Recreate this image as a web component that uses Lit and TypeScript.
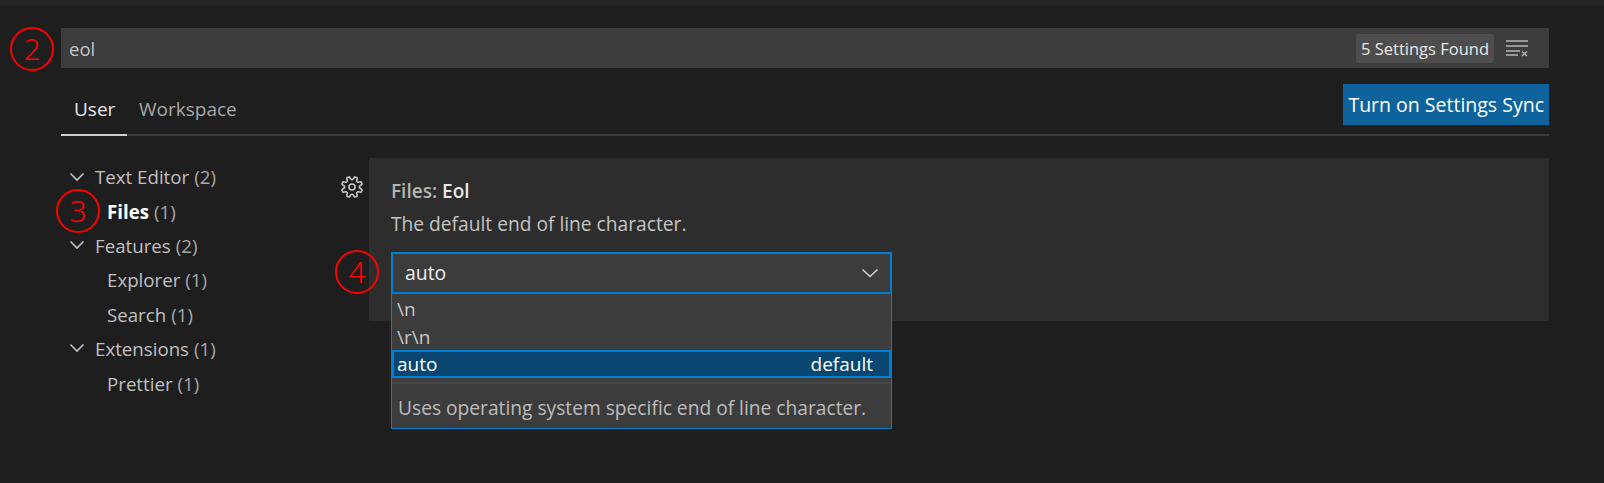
import { LitElement, html, css, svg } from "lit";
import { customElement } from "lit/decorators.js";

const chevron = svg`<svg class="chev" viewBox="0 0 16 10" width="16" height="10"><path d="M1.5 1.5 8 8l6.5-6.5" fill="none" stroke="currentColor" stroke-width="1.6"/></svg>`;

const gearPath = (() => {
  const pts: string[] = [];
  const n = 160;
  for (let i = 0; i < n; i++) {
    const a = (i / n) * Math.PI * 2;
    const w = Math.max(-1, Math.min(1, Math.cos(a * 8 + Math.PI / 8 * 8) * 1.8));
    const r = 9 + 1.5 * w;
    pts.push(`${(12 + r * Math.sin(a)).toFixed(2)} ${(12 - r * Math.cos(a)).toFixed(2)}`);
  }
  return "M" + pts.join("L") + "Z";
})();

const tree = [
  { label: "Text Editor", count: 2, top: true },
  { label: "Files", count: 1, active: true, note: "3" },
  { label: "Features", count: 2, top: true },
  { label: "Explorer", count: 1 },
  { label: "Search", count: 1 },
  { label: "Extensions", count: 1, top: true },
  { label: "Prettier", count: 1 },
];

@customElement("app-root")
export class AppRoot extends LitElement {
  static styles = css`
    :host {
      display: block;
      width: 1604px;
      height: 483px;
      overflow: hidden;
      background: #1e1e1e;
      color: #cccccc;
      font-family: "Open Sans", "Noto Sans", sans-serif;
      font-size: 19px;
    }
    .strip { height: 6px; background: #252526; }
    .content { padding: 22px 55px 0 61px; }
    .search {
      position: relative;
      height: 40px;
      background: #3c3c3c;
      display: flex;
      align-items: center;
      padding: 0 20px 0 8px;
      font-size: 18.5px;
      color: #c4c4c4;
    }
    .query { flex: 1; }
    .found {
      background: #4d4d4d;
      color: #e8e8e8;
      font-size: 16.5px;
      height: 29px;
      line-height: 29px;
      padding: 0 5px;
      border-radius: 2px;
      margin-right: 11px;
    }
    .clear { display: block; }
    .note {
      position: absolute;
      width: 44px;
      height: 44px;
      box-sizing: border-box;
      border: 2px solid #ff0000;
      border-radius: 50%;
      color: #ff0000;
      display: flex;
      align-items: center;
      justify-content: center;
      font-family: "Noto Sans", sans-serif;
      font-weight: 300;
      font-size: 30px;
      line-height: 1;
    }
    .n2 { left: -51px; top: -1px; }
    .n3 { left: -5px; top: -5px; }
    .n4 { left: -56px; top: -2px; }
    .header {
      display: flex;
      justify-content: space-between;
      align-items: flex-start;
      margin-top: 16px;
      height: 50px;
      border-bottom: 2px solid #3a3a3a;
    }
    .tabs { display: flex; height: 52px; }
    .tab {
      height: 52px;
      box-sizing: border-box;
      padding: 12px 13px 0;
      line-height: 26px;
      font-size: 19px;
      color: #a8a8a8;
      white-space: nowrap;
    }
    .tab.on { color: #e7e7e7; border-bottom: 2px solid #d0d0d0; width: 66px; padding: 12px 0 0 13px; }
    .tab.ws { padding-left: 12px; }
    .sync {
      width: 206px;
      height: 41px;
      background: #0e639c;
      color: #ffffff;
      font-size: 19.5px;
      line-height: 41px;
      text-align: right;
      padding-right: 5px;
      box-sizing: border-box;
      white-space: nowrap;
    }
    .body { display: flex; margin-top: 22px; }
    .tree { width: 264px; padding-top: 1.5px; }
    .row {
      position: relative;
      display: flex;
      align-items: center;
      height: 34.4px;
      padding-left: 46px;
      font-size: 18.7px;
      color: #c0c0c0;
      white-space: nowrap;
    }
    .row.top { padding-left: 34px; }
    .chev { position: absolute; left: 8px; top: 12px; color: #c0c0c0; }
    .row b { color: #ffffff; font-weight: 700; }
    .count { color: #a8a8a8; margin-left: 5px; }
    .gear-col { width: 44px; padding-top: 17px; padding-left: 15px; box-sizing: border-box; }
    .gear { display: block; color: #c5c5c5; }
    .panel {
      position: relative;
      flex: 1;
      height: 163px;
      background: #2d2d2d;
      padding: 20px 0 0 22px;
      box-sizing: border-box;
    }
    .title { font-size: 19px; font-weight: 600; line-height: 26px; color: #b4b4b4; }
    .title span { color: #e8e8e8; }
    .desc { font-size: 19.2px; line-height: 26px; margin-top: 7px; color: #c4c4c4; white-space: nowrap; }
    .select-wrap { position: absolute; left: 22px; top: 94px; width: 501px; }
    .select {
      position: relative;
      box-sizing: border-box;
      height: 42px;
      background: #3c3c3c;
      border: 2px solid #007fd4;
      padding-left: 12px;
      line-height: 38px;
      font-size: 19.4px;
      color: #f0f0f0;
      display: flex;
      justify-content: space-between;
      align-items: center;
    }
    .select svg { margin-right: 11px; color: #d0d0d0; }
    .menu {
      box-sizing: border-box;
      height: 135px;
      background: #3c3c3c;
      border: 1.5px solid #007fd4;
      border-top: none;
      font-size: 19px;
    }
    .opt { height: 28px; line-height: 30px; padding: 0 5px; color: #c8c8c8; }
    .opt.sel {
      box-sizing: border-box;
      background: #094771;
      border: 2px solid #007fd4;
      color: #ffffff;
      line-height: 24px;
      padding: 0 16px 0 3px;
      display: flex;
      justify-content: space-between;
    }
    .opt-desc {
      margin-top: 4px;
      border-top: 2px solid #484848;
      padding: 11px 6px 0;
      line-height: 26px;
      font-size: 19.2px;
      color: #bcbcbc;
      white-space: nowrap;
    }
  `;

  render() {
    return html`
      <div class="strip"></div>
      <div class="content">
        <div class="search">
          <div class="note n2">2</div>
          <div class="query">eol</div>
          <div class="found">5 Settings Found</div>
          <svg class="clear" width="24" height="18" viewBox="0 0 24 18" fill="none" stroke="#b4b4b4" stroke-width="1.4">
            <path d="M1 2h22M1 7h22M1 12h14M1 16h12"/>
            <path d="M17 12.5l5 4.5M22 12.5l-5 4.5"/>
          </svg>
        </div>
        <div class="header">
          <div class="tabs">
            <div class="tab on">User</div>
            <div class="tab ws">Workspace</div>
          </div>
          <div class="sync">Turn on Settings Sync</div>
        </div>
        <div class="body">
          <div class="tree">
            ${tree.map(
              (t) => html`<div class="row ${t.top ? "top" : ""}">
                ${t.top ? chevron : ""}
                ${t.note ? html`<div class="note n3">${t.note}</div>` : ""}
                ${t.active ? html`<b>${t.label}</b>` : t.label}
                <span class="count">(${t.count})</span>
              </div>`
            )}
          </div>
          <div class="gear-col">
            <svg class="gear" width="24" height="24" viewBox="0 0 24 24" fill="none" stroke="currentColor" stroke-width="1.6" stroke-linejoin="round">
              <circle cx="12" cy="12" r="3"/>
              <path d=${gearPath}/>
            </svg>
          </div>
          <div class="panel">
            <div class="title">Files: <span>Eol</span></div>
            <div class="desc">The default end of line character.</div>
            <div class="select-wrap">
              <div class="note n4">4</div>
              <div class="select">
                <span>auto</span>
                <svg width="18" height="10" viewBox="0 0 18 10"><path d="M1.5 1.5 9 8.5l7.5-7" fill="none" stroke="currentColor" stroke-width="1.6"/></svg>
              </div>
              <div class="menu">
                <div class="opt">\\n</div>
                <div class="opt">\\r\\n</div>
                <div class="opt sel"><span>auto</span><span>default</span></div>
                <div class="opt-desc">Uses operating system specific end of line character.</div>
              </div>
            </div>
          </div>
        </div>
      </div>
    `;
  }
}
